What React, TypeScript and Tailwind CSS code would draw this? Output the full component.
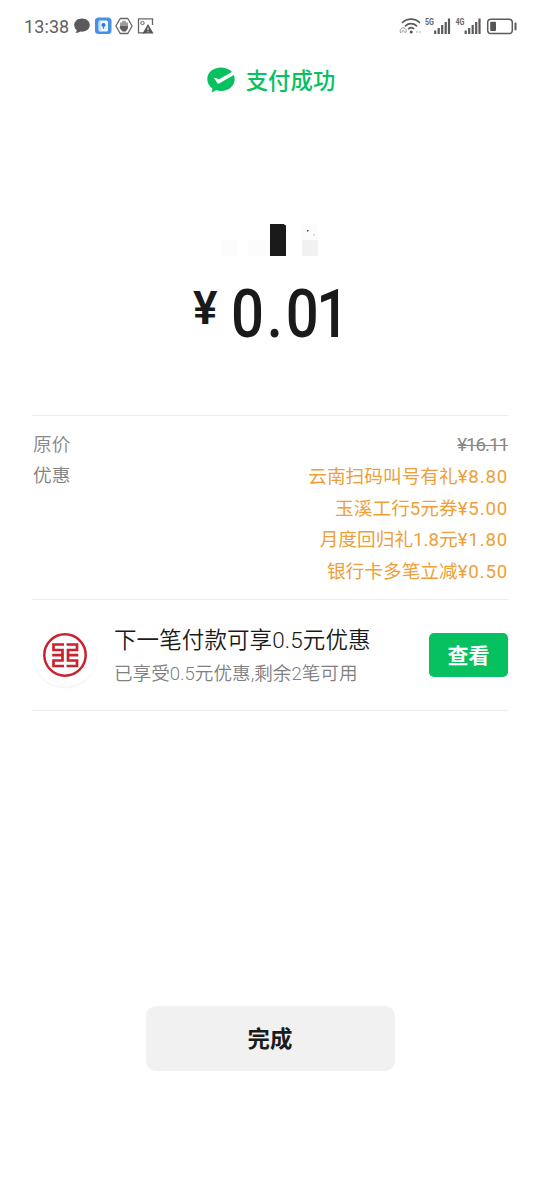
import React from "react";

function StatusLeft() {
  return (
    <div className="flex h-5 items-center">
      <span className="w-[46px] whitespace-nowrap pt-px text-[18px] leading-5 tracking-[0.1px] text-[#606060]">13:38</span>
      <svg className="ml-[3px]" width="84" height="20" viewBox="73 17 84 20" fill="none">
        <path d="M82 19.500c-4.700 0-7.800 2.900-7.800 6.600 0 2.300 1 4 2.700 5.300L75.500 34c2.400-.1 3.800-.6 5-1.400 5.500.6 9.300-2.400 9.300-6.500 0-3.800-3.200-6.600-7.800-6.600z" fill="#5a5a5a" />
        <rect x="95" y="18.500" width="16.500" height="16.500" rx="3.500" fill="#4a90e2" />
        <rect x="98.500" y="21.500" width="9.500" height="11" rx="1.500" fill="#eef6ff" />
        <path d="M100 21.500v11" stroke="#a7caf3" />
        <circle cx="103.500" cy="26" r="2" fill="#3477cd" />
        <path d="M103.500 28v1.700" stroke="#3477cd" strokeWidth="1.300" />
        <path d="M120.200 19.500h7.600l4.300 7.500-4.300 7.500h-7.600l-4.300-7.500z" stroke="#666" strokeWidth="1.300" strokeLinejoin="round" />
        <path d="M121 24v4M123 22.500v6M125 22.500v6M127 24v5" stroke="#666" strokeWidth="1.300" strokeLinecap="round" />
        <path d="M120.300 27h7.500v2.500l-2 3h-3.300l-3-3.500z" fill="#5f5f5f" />
        <path d="M152.500 26v-6.200h-14v14h6" stroke="#666" strokeWidth="1.300" />
        <circle cx="142.500" cy="24" r="1.700" stroke="#666" strokeWidth="1" />
        <path d="m148 25 5.500 9.500h-11z" fill="#555" />
        <path d="M148 28.500v2.700M148 32.300v1" stroke="#fff" strokeWidth="1" />
      </svg>
    </div>
  );
}

function StatusRight() {
  return (
    <svg width="120" height="24" viewBox="398 14 120 24" fill="none">
      <g stroke="#5a5a5a" strokeWidth="1.700" strokeLinecap="round">
        <path d="M402.500 22.500c4.500-4.500 12.500-4.500 17 0" />
        <path d="M405.500 25.800c3-2.900 8-2.900 11 0" />
        <path d="M408.700 28.700c1.400-1.200 3.500-1.200 4.900 0" />
      </g>
      <circle cx="411.200" cy="32" r="1.500" fill="#555" />
      <path d="M400.700 33c-1.800-4 2-6.300 4.300-4.600 1.600 1.100 1.600 3.100.6 4.600M402.200 32.500c-.7-2.500 2.500-2.500 2 0" stroke="#888" strokeWidth=".9" />
      <path d="M416 32h2M419 32h2" stroke="#ccc" strokeWidth="1.500" />
      <text x="425" y="24.500" fontSize="8.500" fontWeight="700" fill="#666" textLength="9" lengthAdjust="spacingAndGlyphs">5G</text>
      <text x="455.500" y="24.500" fontSize="8.500" fontWeight="700" fill="#666" textLength="9" lengthAdjust="spacingAndGlyphs">4G</text>
      <path d="M435.200 30.500V34M438.700 28v6M442.200 25v9M445.700 22v12M449 18.500V34" stroke="#5a5a5a" strokeWidth="2.200" />
      <path d="M465.700 30.500V34M469.200 28v6M472.700 25v9M476.200 22v12M479.500 18.500V34" stroke="#5a5a5a" strokeWidth="2.200" />
      <rect x="487.700" y="19.200" width="24.600" height="14.300" rx="3.300" stroke="#5a5a5a" strokeWidth="1.500" />
      <rect x="490.200" y="21.700" width="5.800" height="9.300" rx="1" fill="#555" />
      <path d="M515.500 23.500v6" stroke="#5a5a5a" strokeWidth="2" strokeLinecap="round" />
    </svg>
  );
}

function BankLogo() {
  return (
    <svg width="44" height="44" viewBox="43 633 44 44" fill="none" stroke="#c8232e">
      <circle cx="65" cy="655" r="20.700" strokeWidth="2.500" />
      <g strokeWidth="2.700">
        <path d="M64 644.500H53.500v5.500h9v10.500h-9v5.500H64M52.200 655.200h10.300" />
        <path d="M66.500 644.500H77v5.500h-9v10.500h9v5.500H66.500M78.300 655.200H68" />
      </g>
    </svg>
  );
}

const discounts = [
  { name: "云南扫码叫号有礼", value: "¥8.80" },
  { name: "玉溪工行5元券", value: "¥5.00" },
  { name: "月度回归礼1.8元", value: "¥1.80" },
  { name: "银行卡多笔立减", value: "¥0.50" },
];

export default function App() {
  return (
    <main className="flex h-[1200px] w-[540px] flex-col bg-white font-[Roboto,'Noto_Sans_CJK_SC',sans-serif] text-[#1a1a1a]">
      <header className="flex h-[52px] items-center justify-between pl-6 pr-[22px]">
        <StatusLeft />
        <StatusRight />
      </header>

      <div className="flex h-14 items-center justify-center gap-[10px] pl-px text-[#07c160]">
        <svg width="30" height="28" viewBox="206 66 30 28">
          <path d="M221 67.500c-8 0-13.700 5-13.700 11.700 0 3.900 2 7.200 5.200 9.400l-.8 3.900 4.500-2.200c1.500.4 3.100.6 4.800.6 8 0 13.700-5.100 13.700-11.700S229 67.500 221 67.500z" fill="#07c160" />
          <path d="m213.700 77.500 3.800 5.700c.4.600 1 .7 1.600.4L235.500 74l-1.800-2.900-14.700 8.100z" fill="#fff" />
        </svg>
        <h1 className="pt-0.5 text-[22.400px] font-medium leading-8">支付成功</h1>
      </div>

      <section className="flex h-[307px] flex-col items-center pt-[116px]">
        <svg width="96" height="32" viewBox="222 224 96 32">
          <path fill="#fcfcfc" d="M222 240h16v16h-16zM248 240h22v16h-22zM302 224h16v16h-16z" />
          <path fill="#1a1a1a" d="M270 224h14q1 2 2 1v31h-16z" />
          <path fill="#f1f1f1" d="M302 240h16v16h-16z" />
          <path fill="#444" d="M307 230h1.500v1.500H307z" />
          <path fill="#ccc" d="M313 234h1.500v1.500H313z" />
        </svg>
        <div className="mt-[19px] flex h-20 w-[154px] items-start whitespace-nowrap font-semibold">
          <span className="w-[38px] shrink-0 pt-[11px] text-[46px] leading-[44px]">¥</span>
          <span className="origin-left scale-x-[.88] text-[66px] font-medium leading-20">
            <span className="tracking-[3.200px]">0.</span>
            <span className="tracking-[-3px]">0</span>1
          </span>
        </div>
      </section>

      <section className="mx-8 flex h-[185px] flex-col border-y border-[#ededed] pt-[14px] text-[18.700px]">
        <div className="flex h-[31px] items-center justify-between text-[#888]">
          <span className="pl-px font-[350]">原价</span>
          <span className="tracking-[-1px] line-through decoration-1">¥16.11</span>
        </div>
        <div className="flex justify-between">
          <span className="h-8 pl-px font-[350] leading-[31px] text-[#808080]">优惠</span>
          <div className="flex flex-col items-end text-[#ee9f3a]">
            {discounts.map((item) => (
              <div key={item.name} className="h-[31.500px] whitespace-nowrap leading-[32px]">
                {item.name}<span className="tracking-[0.800px]">{item.value}</span>
              </div>
            ))}
          </div>
        </div>
      </section>

      <section className="mx-8 flex h-[111px] items-center border-b border-[#ededed]">
        <div className="ml-px flex size-16 items-center justify-center rounded-full shadow-[0_1px_2px_#eeeeee]">
          <BankLogo />
        </div>
        <div className="ml-[17px] flex flex-1 flex-col pt-[4px] font-[350]">
          <span className="h-[34px] text-[22.500px] leading-[34px] tracking-[0.100px]">下一笔付款可享0.5元优惠</span>
          <span className="h-[34px] text-[18.600px] leading-[34px] text-[#808080]">已享受0.5元优惠,剩余2笔可用</span>
        </div>
        <button className="h-11 w-[79px] rounded-[5px] bg-[#07c160] pt-1 text-[21px] font-bold text-white">查看</button>
      </section>

      <button className="mx-auto mt-[295px] h-[65px] w-[249px] rounded-[10px] bg-[#f1f1f1] pt-0.5 text-[22.400px] font-bold">完成</button>
    </main>
  );
}
